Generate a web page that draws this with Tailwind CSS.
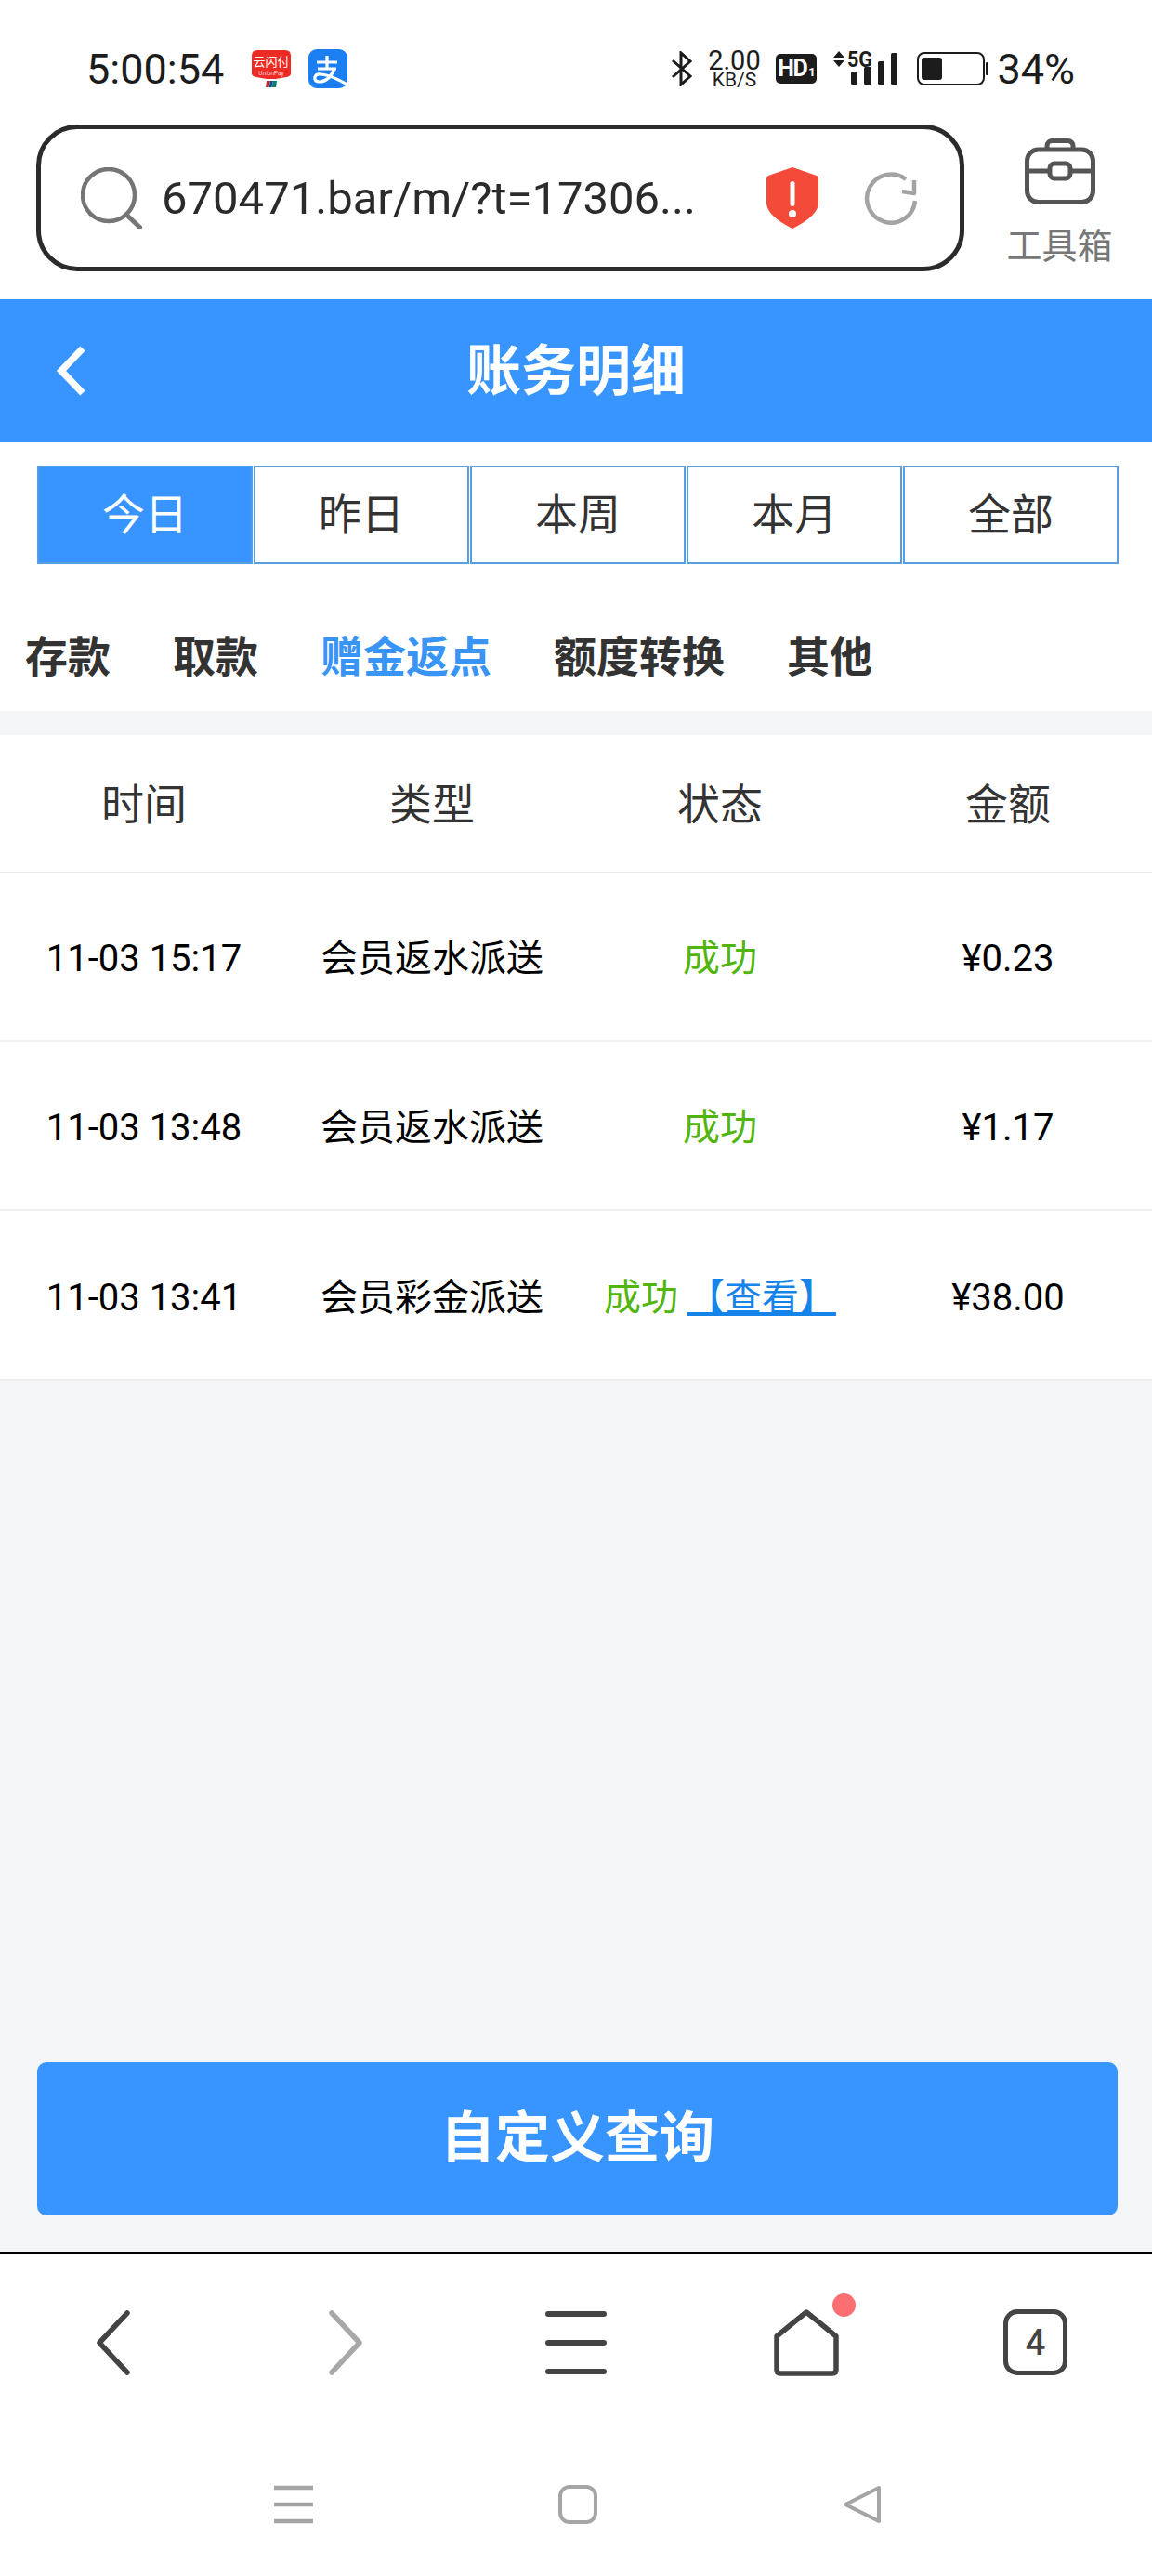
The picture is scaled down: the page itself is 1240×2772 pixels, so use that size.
<!DOCTYPE html>
<html lang="zh-CN">
<head>
	<meta charset="UTF-8">
	<meta name="viewport" content="width=device-width, initial-scale=1.0">
	<title>账务明细</title>
	<script src="https://cdn.jsdelivr.net/npm/@tailwindcss/browser@4"></script>
</head>
<body class="bg-white font-['Roboto','Noto_Sans_CJK_SC',sans-serif]">
<div class="flex flex-col h-[2772px] w-[1240px] overflow-hidden">

	<!-- status bar -->
	<div class="flex items-center h-[134px] pt-[14px] pl-[93px] pr-[83px] text-[#1c1c1c] shrink-0">
		<span class="w-[148px] text-[45px] leading-none">5:00:54</span>
		<svg class="ml-[30px] w-[42px] h-[40px]" viewBox="0 0 42 40">
			<path d="M6 0H36Q42 0 42 6V25Q42 28 37 29L26 31H16L5 29Q0 28 0 25V6Q0 0 6 0Z" fill="#ec2b25"/>
			<text x="21" y="17" text-anchor="middle" font-size="13" fill="#fff" font-family="Noto Sans CJK SC">云闪付</text>
			<text x="21" y="27" text-anchor="middle" font-size="6.5" fill="#ffd9d6" font-family="Roboto">UnionPay</text>
			<path d="M16 33H20L18.500 40H15Z" fill="#c8242a"/><path d="M20 33H23L21.500 40H18.500Z" fill="#0a4f8f"/><path d="M23 33H27L26 40H21.500Z" fill="#0a7f7a"/>
		</svg>
		<svg class="ml-[19px] w-[42px] h-[42px]" viewBox="0 0 42 42">
			<rect width="42" height="42" rx="9" fill="#1b7ff2"/>
			<path d="M9 14H31M20 7V21M10 21H30M28 21Q22 35 12 35Q6 35 7 30Q8 26 14 27Q24 28 42 38" fill="none" stroke="#fff" stroke-width="3.2"/>
		</svg>

		<svg class="ml-auto w-[24px] h-[38px]" viewBox="0 0 24 38">
			<path d="M2 10L21 27L11 36V2L21 11L2 28" fill="none" stroke="#1c1c1c" stroke-width="3"/>
		</svg>
		<div class="ml-[15px] w-[58px] flex flex-col items-center leading-none">
			<span class="text-[29px] h-[24px] leading-[24px]">2.00</span>
			<span class="text-[21px] h-[18px] leading-[18px]">KB/S</span>
		</div>
		<div class="ml-[16px] w-[44px] h-[32px] rounded-[5px] bg-[#1c1c1c] text-white flex items-baseline justify-center font-bold leading-[32px]">
			<span class="text-[25px] tracking-[-1.5px]">HD</span><span class="text-[13px] ml-[2px]">1</span>
		</div>
		<svg class="ml-[18px] w-[70px] h-[50px]" viewBox="0 -6 70 50">
			<path d="M6 0L12 7H0ZM6 17L12 10H0Z" fill="#1c1c1c"/>
			<text x="15" y="17" font-size="24" font-weight="700" fill="#1c1c1c" font-family="Roboto" textLength="27" lengthAdjust="spacingAndGlyphs">5G</text>
			<rect x="19" y="22" width="7" height="14" rx="1.5" fill="#1c1c1c"/>
			<rect x="33" y="17" width="8" height="19" rx="1.5" fill="#1c1c1c"/>
			<rect x="48" y="11" width="7" height="25" rx="1.5" fill="#1c1c1c"/>
			<rect x="62" y="2" width="7" height="34" rx="1.5" fill="#1c1c1c"/>
		</svg>
		<svg class="ml-[20px] w-[78px] h-[36px]" viewBox="0 0 78 36">
			<rect x="1" y="1" width="71" height="34" rx="7" fill="none" stroke="#1c1c1c" stroke-width="2"/>
			<rect x="5" y="6" width="22" height="24" rx="3" fill="#1c1c1c"/>
			<rect x="74" y="11" width="3" height="14" rx="1" fill="#1c1c1c"/>
		</svg>
		<span class="ml-[8px] text-[45px] leading-none">34%</span>
	</div>

	<!-- browser toolbar -->
	<div class="flex items-start h-[188px] pl-[39px] shrink-0">
		<div class="flex items-center w-[999px] h-[158px] rounded-[44px] border-[5px] border-[#2b2b2b] pl-[43px]">
			<svg class="w-[66px] h-[66px] shrink-0" viewBox="0 0 66 66">
				<circle cx="30" cy="30" r="28" fill="none" stroke="#757575" stroke-width="4.5"/>
				<path d="M49 51L64 65" stroke="#757575" stroke-width="5" stroke-linecap="round"/>
			</svg>
			<span class="ml-[21px] text-[49px] leading-none text-[#2b2b2b] whitespace-nowrap w-[573px]">670471.bar/m/?t=17306...</span>
			<svg class="ml-[78px] w-[56px] h-[66px] shrink-0" viewBox="0 0 56 66">
				<path d="M28 0L54 9Q56 10 56 13V38Q56 52 28 66Q0 52 0 38V13Q0 10 2 9Z" fill="#f44a3a"/>
				<rect x="25.5" y="15" width="5" height="27" rx="2.5" fill="#fff"/>
				<circle cx="28" cy="50" r="4" fill="#fff"/>
			</svg>
			<svg class="ml-[48px] w-[58px] h-[58px] shrink-0" viewBox="0 0 58 58">
				<path d="M56 32A26 26 0 1 1 46 9" fill="none" stroke="#a3a3a3" stroke-width="4.5"/>
				<path d="M55 10L55 24L42 22" fill="none" stroke="#a3a3a3" stroke-width="4.5" stroke-linejoin="round"/>
			</svg>
		</div>
		<div class="flex-1 flex flex-col items-center pl-[3px] pt-[15px]">
			<svg class="w-[76px] h-[71px]" viewBox="0 0 76 71">
				<rect x="2.500" y="12" width="71" height="56.500" rx="12" fill="none" stroke="#555" stroke-width="5"/>
				<path d="M24 12V8A5.500 5.500 0 0 1 29.500 2.500H46.500A5.500 5.500 0 0 1 52 8V12" fill="none" stroke="#555" stroke-width="5"/>
				<path d="M2 35H27M49 35H74" stroke="#555" stroke-width="5"/>
				<rect x="27" y="27" width="22" height="16" rx="5" fill="none" stroke="#555" stroke-width="5"/>
			</svg>
			<span class="mt-[26px] text-[38px] leading-none text-[#777]">工具箱</span>
		</div>
	</div>

	<!-- page header -->
	<div class="relative flex items-center justify-center h-[154px] bg-[#3894ff] shrink-0">
		<svg class="absolute left-[60px] top-[50px] w-[34px] h-[54px]" viewBox="0 0 34 54">
			<path d="M29 3L6 27L29 51" fill="none" stroke="#fff" stroke-width="7.500"/>
		</svg>
		<h1 class="text-[59px] leading-none font-bold text-white">账务明细</h1>
	</div>

	<!-- date range tabs -->
	<div class="grid grid-cols-5 gap-[1px] mt-[25px] ml-[40px] w-[1164px] h-[106px] shrink-0 text-[46px] text-[#333]">
		<div class="flex items-center justify-center border-2 border-[#5a9ee2] bg-[#3894ff] text-white">今日</div>
		<div class="flex items-center justify-center border-2 border-[#5a9ee2]">昨日</div>
		<div class="flex items-center justify-center border-2 border-[#5a9ee2]">本周</div>
		<div class="flex items-center justify-center border-2 border-[#5a9ee2]">本月</div>
		<div class="flex items-center justify-center border-2 border-[#5a9ee2]">全部</div>
	</div>

	<!-- record type tabs -->
	<div class="flex items-center gap-[67px] pl-[27px] pt-[42px] h-[158px] shrink-0 text-[46px] font-bold text-[#333]">
		<span>存款</span>
		<span>取款</span>
		<span class="text-[#3894f5]">赠金返点</span>
		<span>额度转换</span>
		<span>其他</span>
	</div>

	<!-- records -->
	<div class="flex-1 flex flex-col bg-[#f4f5f7] pt-[26px]">
		<div class="bg-white">
			<div class="grid grid-cols-4 h-[148px] pt-[3px] items-center text-center text-[46px] text-[#333] border-b border-[#ececec]">
				<span>时间</span><span>类型</span><span>状态</span><span>金额</span>
			</div>
			<div class="grid grid-cols-4 h-[182px] pt-[6px] items-center text-center text-[40px] text-black border-b-2 border-[#f0f0f0]">
				<span>11-03 15:17</span><span>会员返水派送</span><span class="text-[#52b50e]">成功</span><span>¥0.23</span>
			</div>
			<div class="grid grid-cols-4 h-[182px] pt-[6px] items-center text-center text-[40px] text-black border-b-2 border-[#f0f0f0]">
				<span>11-03 13:48</span><span>会员返水派送</span><span class="text-[#52b50e]">成功</span><span>¥1.17</span>
			</div>
			<div class="grid grid-cols-4 h-[183px] pt-[6px] items-center text-center text-[40px] text-black border-b-2 border-[#eeeeee]">
				<span>11-03 13:41</span><span>会员彩金派送</span>
				<span class="whitespace-nowrap"><span class="text-[#52b50e]">成功</span> <a href="#" class="text-[#1683e8] underline">【查看】</a></span>
				<span>¥38.00</span>
			</div>
		</div>
		<button class="mt-auto mb-[39px] ml-[40px] w-[1163px] h-[165px] shrink-0 rounded-[10px] bg-[#3894ff] text-white text-[59px] font-bold">自定义查询</button>
	</div>

	<!-- browser bottom bar -->
	<div class="h-[349px] shrink-0 border-t-2 border-t-black">
		<div class="grid grid-cols-5 w-[1240px] h-[194px] pt-[60px] items-start justify-items-center">
			<svg class="w-[40px] h-[72px] mr-[4px]" viewBox="0 0 40 72">
				<path d="M35 4L5 36L35 68" fill="none" stroke="#444" stroke-width="5.500" stroke-linecap="round" stroke-linejoin="round"/>
			</svg>
			<svg class="w-[40px] h-[72px]" viewBox="0 0 40 72">
				<path d="M5 4L35 36L5 68" fill="none" stroke="#a8a8a8" stroke-width="5.500" stroke-linecap="round" stroke-linejoin="round"/>
			</svg>
			<svg class="w-[66px] h-[72px]" viewBox="0 0 66 72">
				<path d="M3 5H63M3 36H63M3 67H63" fill="none" stroke="#444" stroke-width="6" stroke-linecap="round"/>
			</svg>
			<div class="relative w-[72px] h-[72px]">
				<svg class="w-[72px] h-[72px]" viewBox="0 0 72 72">
					<path d="M36 3L68 29V65Q68 69 64 69H8Q4 69 4 65V29Z" fill="none" stroke="#444" stroke-width="5.500" stroke-linejoin="round"/>
				</svg>
				<span class="absolute left-[64px] top-[-17px] w-[25px] h-[25px] rounded-full bg-[#fb6f72]"></span>
			</div>
			<div class="flex items-center justify-center w-[69px] h-[71px] mr-[3px] rounded-[15px] border-[5px] border-[#444] text-[38px] font-medium leading-none text-[#444]">4</div>
		</div>
		<div class="flex items-start justify-center pl-[3px] gap-[264px] pt-[55px]">
			<svg class="w-[42px] h-[42px]" viewBox="0 0 42 42">
				<path d="M0 3H42M0 21H42M0 39H42" stroke="#a5a5a5" stroke-width="4.500"/>
			</svg>
			<svg class="w-[42px] h-[42px]" viewBox="0 0 42 42">
				<rect x="2" y="2" width="38" height="38" rx="10" fill="none" stroke="#a5a5a5" stroke-width="4"/>
			</svg>
			<svg class="w-[42px] h-[42px]" viewBox="0 0 42 42">
				<path d="M39 3V39L3 21Z" fill="none" stroke="#a5a5a5" stroke-width="4" stroke-linejoin="round"/>
			</svg>
		</div>
	</div>
</div>
</body>
</html>
